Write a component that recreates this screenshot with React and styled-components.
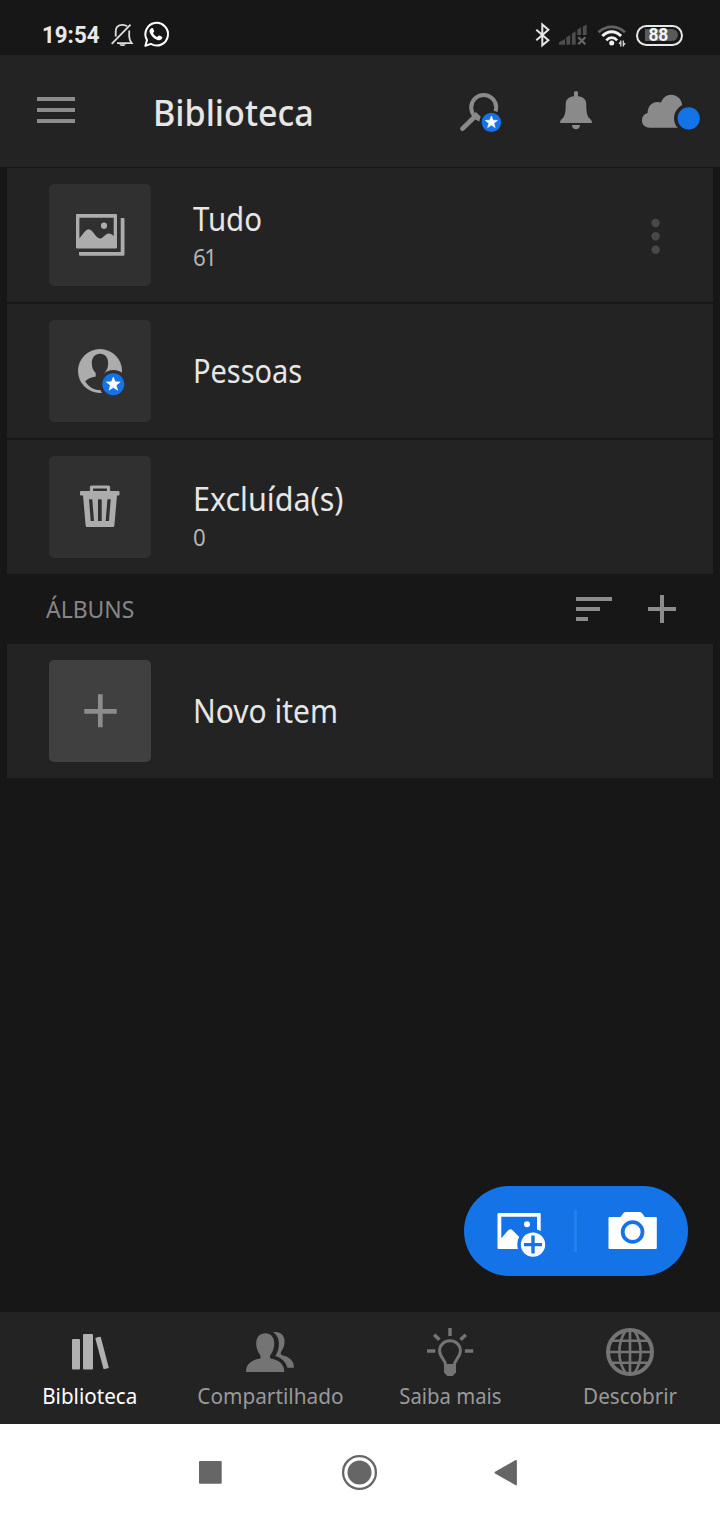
import React from 'react';
import styled, { createGlobalStyle } from 'styled-components';

const GlobalStyle = createGlobalStyle`
  *, *::before, *::after { box-sizing: border-box; }
  html, body { margin: 0; background: #171717; }
  body { font-family: "Noto Sans", "Open Sans", sans-serif; }
  button { border: 0; padding: 0; background: none; font: inherit; color: inherit; }
`;

const Screen = styled.div`
  display: flex;
  flex-direction: column;
  width: 720px;
  height: 1520px;
  background: #171717;
  overflow: hidden;
`;

const Label = styled.span`
  display: block;
  width: max-content;
  font-size: ${p => p.$size}px;
  line-height: ${p => p.$line}px;
  font-weight: ${p => p.$weight || 400};
  color: ${p => p.$color || '#e6e6e6'};
  letter-spacing: ${p => p.$tracking || 0}px;
  transform: scaleX(${p => p.$stretch || 1});
  transform-origin: ${p => p.$origin || 'left'} center;
`;

const Svg = styled.svg`
  display: block;
  flex: none;
  overflow: visible;
`;

/* Every drawing keeps screen units, so the view box also gives its size. */
function Icon({ box, children, ...rest }) {
  const [, , w, h] = box.split(' ');
  return (
    <Svg width={w} height={h} viewBox={box} fill="none" aria-hidden="true" {...rest}>
      {children}
    </Svg>
  );
}

/* ---------- status bar ---------- */

const StatusBar = styled.header`
  display: flex;
  justify-content: space-between;
  align-items: flex-start;
  height: 55px;
  padding: 20px 37.5px 0 41.5px;
`;

const StatusGroup = styled.div`
  display: flex;
  align-items: center;
  height: 30px;
  gap: ${p => p.$gap}px;
`;

const Clock = styled.time`
  width: 58px;
  margin-right: 1px;
  font: 700 23.5px/30px Roboto, sans-serif;
  color: #e8e8e8;
  white-space: nowrap;
  transform: scaleX(0.95);
  transform-origin: left center;
`;

const Battery = styled.div`
  width: 46.5px;
  height: 21px;
  border: 2px solid #e8e8e8;
  border-radius: 11px;
  padding: 2.5px 2.5px 2.5px 6.5px;
`;

const Charge = styled.div`
  height: 12px;
  padding-left: 4px;
  border-radius: 0 6px 6px 0;
  background: #595959;
  color: #f4f4f4;
  font: 700 17.5px/13px Roboto, sans-serif;
  letter-spacing: -0.3px;
`;

/* ---------- top bar ---------- */

const TopBar = styled.div`
  display: flex;
  align-items: center;
  height: 112px;
  padding: 0 19px 0 37px;
  background: #232323;
`;

const Title = styled.h1`
  flex: 1;
  margin: 0;
  padding: 4px 0 0 78px;
`;

const Actions = styled.div`
  display: flex;
  gap: 40px;
`;

/* ---------- library list ---------- */

const Content = styled.main`
  flex: 1;
  display: flex;
  flex-direction: column;
  padding: 1px 7px 0;
  position: relative;
`;

const List = styled.div`
  display: flex;
  flex-direction: column;
  gap: 2px;
`;

const Row = styled.div`
  display: flex;
  align-items: center;
  height: 134px;
  padding: 0 53px 0 42px;
  background: #232323;
`;

const Thumb = styled.div`
  display: flex;
  align-items: center;
  justify-content: center;
  width: 102px;
  height: 102px;
  border-radius: 5px;
  background: ${p => (p.$light ? '#404040' : '#303030')};
`;

const RowText = styled.div`
  flex: 1;
  display: flex;
  flex-direction: column;
  gap: 2px;
  margin-left: 42px;
  padding-top: ${p => p.$drop || 0}px;
`;

const SectionBar = styled.div`
  display: flex;
  align-items: center;
  height: 70px;
  padding: 0 37px 0 39px;
`;

const SectionTools = styled.div`
  display: flex;
  gap: 36px;
  margin-left: auto;
`;

/* ---------- floating actions ---------- */

const Fab = styled.div`
  position: absolute;
  right: 32px;
  bottom: 36px;
  display: flex;
  align-items: center;
  width: 224px;
  height: 90px;
  padding: 0 31px 0 33px;
  border-radius: 45px;
  background: #1473e6;
`;

const FabDivider = styled.span`
  width: 3px;
  height: 42px;
  margin: 0 31px 0 28px;
  background: #2680eb;
`;

/* ---------- tabs ---------- */

const Tabs = styled.nav`
  display: grid;
  grid-template-columns: repeat(4, 1fr);
  height: 112px;
  background: #232323;
`;

const Tab = styled.button`
  display: flex;
  flex-direction: column;
  align-items: center;
  padding-top: 14px;
`;

const SystemBar = styled.footer`
  display: flex;
  align-items: center;
  height: 96px;
  padding: 1px 0 0 198px;
  background: #fff;
`;

const SystemButton = styled.button`
  margin-right: ${p => p.$after || 0}px;
`;

function StarBadge({ cx, cy, r }) {
  const pts = Array.from({ length: 10 }, (_, i) => {
    const d = i % 2 ? r * 0.28 : r * 0.66;
    const a = -Math.PI / 2 + (i * Math.PI) / 5;
    return `${(cx + d * Math.cos(a)).toFixed(2)},${(cy + d * Math.sin(a)).toFixed(2)}`;
  }).join(' ');
  return (
    <>
      <circle cx={cx} cy={cy} r={r} fill="#1473e6" />
      <polygon points={pts} fill="#fff" stroke="#fff" strokeWidth="0.6" />
    </>
  );
}

const MutedBell = () => (
  <Icon box="109.5 22 23 26" stroke="#dedede" strokeWidth="1.8">
    <path d="M115.200 36.500V31.500c0-4.200 2.700-6.700 6.800-6.700 1.800 0 3.300.500 4.600 1.500M128.700 30.500v6c0 2 .7 4.200 2.600 6.700h-14.800" />
    <path d="M111.200 43.800 130 24.700" />
    <path d="M118.800 44.200h6.400c-.6 1.200-1.700 1.900-3.200 1.900s-2.600-.7-3.200-1.900z" fill="#dedede" stroke="none" />
  </Icon>
);

const WhatsApp = () => (
  <Icon box="142 21 28 28">
    <path d="M145.400 45.800l1.600-5.800a11.300 11.300 0 1 1 3.900 3.900z" stroke="#fff" strokeWidth="2" strokeLinejoin="round" />
    <path
      d="M150.300 29.200c.6-.9 1.600-1.600 2.300-1.200.5.200 1.400 2.500 1.600 3.100.2.700-1.200 1.700-1.100 2.200.2 1 2.500 3.300 3.800 3.600.7.200 1.600-1.600 2.300-1.400.8.200 2.800 1.200 3.100 1.600.5.800-.8 2.500-2.100 3-1.500.5-4.500-.5-7-2.700-2.400-2.200-4.100-5.100-3.700-7.100.1-.4.400-.8.800-1.100z"
      fill="#fff"
    />
  </Icon>
);

const Bluetooth = () => (
  <Icon box="533 22 16 26" stroke="#e6e6e6" strokeWidth="2">
    <path d="M536.300 29.800 548.400 40.200 542.300 45.300V24.500l6.100 5.300-12.100 10.400" />
  </Icon>
);

const Signal = () => (
  <Icon box="558 22 30 26" fill="#4d4d4d">
    <path d="M559 44.700v-2.500l6-3.200v5.700zM566.400 44.700v-7.500l3.800-2.200v9.700zM571.900 44.700V33.500l3.700-2.200v13.400zM577.300 35v-5.500l3.700-2V35zM582.800 35v-8.500l3.800-2V35z" />
    <path d="M578.300 37.300l7 7M585.300 37.300l-7 7" stroke="#686868" strokeWidth="2.200" />
  </Icon>
);

const Wifi = () => (
  <Icon box="597 22 30 26">
    <path d="M598.500 32.200c8-7.200 18.500-7.200 26.500 0" stroke="#626262" strokeWidth="2.700" />
    <path d="M602.300 36c5.600-5.700 13.200-5.700 18.800 0" stroke="#f0f0f0" strokeWidth="2.900" />
    <path d="M606.300 40.300c3.200-3.600 7.600-3.600 10.800 0" stroke="#f0f0f0" strokeWidth="2.700" />
    <circle cx="611.700" cy="43" r="2.500" fill="#f0f0f0" />
    <path d="M620.800 46.500v-6M623.300 40.500v6M621 41.300l-2 2.500M623.200 45.700l2-2.500" stroke="#d8d8d8" strokeWidth="1.300" />
  </Icon>
);

const MenuIcon = () => (
  <Icon box="37 92 38 38" fill="#8c8c8c">
    <path d="M37 97h38v4H37zM37 108h38v4H37zM37 119h38v4H37z" />
  </Icon>
);

const SearchIcon = () => (
  <Icon box="459 90 52 42">
    <circle cx="483.700" cy="107.500" r="12.500" stroke="#8a8a8a" strokeWidth="4" />
    <path d="M475 116.500 462.500 128.600" stroke="#8a8a8a" strokeWidth="4.800" strokeLinecap="round" />
    <circle cx="491.400" cy="122.400" r="12" fill="#232323" />
    <path d="M474.500 113.500 479.500 118.300" stroke="#8a8a8a" strokeWidth="4" />
    <StarBadge cx={491.400} cy={122.400} r={9.700} />
  </Icon>
);

const BellIcon = () => (
  <Icon box="551 90 50 42" fill="#8a8a8a">
    <path d="M574 92.500q0-1.500 2-1.500t2 1.500v3.700c5.300.6 8.300 3 8.300 8.300 0 6.500.6 11 2.600 13.200 1.700 1.900 3.100 2.600 3.100 5.300h-32c0-2.700 1.400-3.400 3.100-5.300 2-2.200 2.600-6.700 2.600-13.200 0-5.300 3-7.700 8.300-8.300z" />
    <path d="M571.800 125h8.300c-.4 2.700-1.900 4.300-4.100 4.300s-3.800-1.600-4.200-4.300z" />
  </Icon>
);

const CloudIcon = () => (
  <Icon box="641 90 60 42" fill="#8a8a8a">
    <path d="M649.500 127.700a7.500 7.500 0 0 1-1.900-14.800c0-6.500 4.600-11 10.200-10.800 1.300 0 2.300.2 3.200.5 1.500-4.700 5.500-7.900 10.300-7.900 6 0 11 5 11 11.500v21.500z" />
    <circle cx="688.700" cy="118.300" r="14.700" fill="#232323" />
    <circle cx="688.700" cy="118.300" r="11.100" fill="#1473e6" />
  </Icon>
);

const PhotosIcon = () => (
  <Icon box="75 210 50 50" fill="#acacac">
    <path fillRule="evenodd" d="M77 214h39q1 0 1 1v32.400q0 1-1 1H77q-1 0-1-1V215q0-1 1-1zM79.400 217.700v20.800c2.600-3 6-9.300 9.400-9.300 4.300 0 6.500 9.200 11.400 9.200 3.300 0 5-4.900 8.600-4.900 2 0 3.500 1 4.900 2.500v-18.300z" />
    <circle cx="104" cy="225.700" r="3.100" />
    <path d="M120.700 218h2.800q1 0 1 1v35.700q0 1-1 1H80q-1 0-1-1V252h41.700z" />
  </Icon>
);

const PeopleIcon = () => (
  <Icon box="75 346 50 50">
    <circle cx="100" cy="371" r="22" fill="#acacac" />
    <path
      d="M100 353.700c5 0 8.200 3.800 8.200 9.200 0 4.300-1.300 7.600-3.900 10.200v3.500c5 1.200 9 2.200 11 4.600-3 5.600-8.500 8.800-15.300 8.800-6.300 0-11.500-3.100-14.800-8.800 2-2.300 5.800-3.700 10.500-4.700v-3.400c-2.600-2.600-3.900-5.900-3.900-10.200 0-5.400 3.200-9.200 8.200-9.200z"
      fill="#303030"
    />
    <circle cx="113.300" cy="384.300" r="14.200" fill="#303030" />
    <StarBadge cx={113.300} cy={384.300} r={11} />
  </Icon>
);

const TrashIcon = () => (
  <Icon box="75 482 50 50" fill="#acacac">
    <path d="M91.500 492v-5h17v5" fill="none" stroke="#acacac" strokeWidth="3.200" strokeLinejoin="round" />
    <path d="M81 491h37.500q1 0 1 1v2.600q0 1-1 1H117l-2.700 30.300q-.1 1.100-1.200 1.100H86.900q-1.100 0-1.200-1.100L83 495.600h-2q-1 0-1-1V492q0-1 1-1z" />
    <path d="M98 500q0-.8.8-.8h2.100q.8 0 .8.800v21h-3.700zM89 499.300h3.300L94 521h-3.300zM107.400 499.300h3.300L109 521h-3.300z" fill="#303030" />
  </Icon>
);

const NewIcon = () => (
  <Icon box="75 686 50 50" stroke="#8c8c8c" strokeWidth="4.700" strokeLinecap="butt">
    <path d="M84.300 711.300h32.400M100.300 694.300v33" />
  </Icon>
);

const MoreIcon = () => (
  <Icon box="651 216 9 38" fill="#484848">
    <circle cx="655.600" cy="223" r="4.200" />
    <circle cx="655.600" cy="236.300" r="4.200" />
    <circle cx="655.600" cy="249.700" r="4.200" />
  </Icon>
);

const SortIcon = () => (
  <Icon box="576 594 36 30" fill="#8c8c8c">
    <path d="M576 597h36v4h-36zM576 607h24v4h-24zM576 617h12v4h-12z" />
  </Icon>
);

const AddIcon = () => (
  <Icon box="648 594 28 30" fill="#8c8c8c">
    <path d="M648 607h12v-12h4v12h12v4h-12v12h-4v-12h-12z" />
  </Icon>
);

const AddPhotoIcon = () => (
  <Icon box="497 1205 49 52" fill="#fff">
    <path fillRule="evenodd" d="M498.500 1213h41.500q.7 0 .7.700v34.600q0 .7-.7.700h-41.500q-1 0-1-1v-34q0-1 1-1zM501.300 1216.700v21.600l6.500-7.600q2.500-2.800 5-.2l8 8v10h16.200v-31.800z" />
    <circle cx="527" cy="1224.300" r="3" />
    <circle cx="533" cy="1244.600" r="15.700" fill="#1473e6" />
    <circle cx="533" cy="1244.600" r="12.200" />
    <path d="M524 1244.600h18M533 1235.600v18" stroke="#1473e6" strokeWidth="3.400" />
  </Icon>
);

const CameraIcon = () => (
  <Icon box="608 1205 49 52" fill="#fff">
    <path d="M609.500 1217h11l3-3.900q.9-1.100 2.300-1.100h13.700q1.400 0 2.300 1.100l3 3.900h11q1 0 1 1v30q0 1-1 1h-46.300q-1 0-1-1v-30q0-1 1-1z" />
    <circle cx="632.600" cy="1232" r="9.900" stroke="#1473e6" strokeWidth="3.800" />
  </Icon>
);

const BooksIcon = () => (
  <Icon box="60 1326 60 52" fill="#b1b1b1">
    <path d="M72 1340q0-1 1-1h6q1 0 1 1v28.500q0 1-1 1h-6q-1 0-1-1zM83 1335q0-1 1-1h8q1 0 1 1v33.500q0 1-1 1h-8q-1 0-1-1zM95.400 1338.700q-.2-.8.600-1l3.800-1q.8-.2 1 .6l7.900 29.900q.2.800-.6 1l-3.700.9q-.8.200-1-.6z" />
  </Icon>
);

const ShareIcon = () => (
  <Icon box="240 1326 60 52" fill="#747474">
    <path d="M265.300 1333.300c5.400 0 9 4 9 10.300 0 4.700-1.600 8.400-3.700 11.200-1 1.400-1 3.500.6 4 7.500 1.200 13.100 5 13.100 13.200h-38.300c0-8.200 5.900-12 13.400-13.200 1.500-.5 1.500-2.600.5-4-2.100-2.800-3.700-6.500-3.700-11.200 0-6.300 3.700-10.300 9.100-10.300z" />
    <path d="M273.300 1332.300c6.600-1.200 11.300 2.700 11.300 9.200 0 4-1.300 7.200-3.300 10-1 1.500-.7 3.300.9 3.700 7 1.400 11.800 5.500 11.800 12.500h-6.600c-1.900-6.100-5.900-9.800-12.100-11.700 2.400-3.500 3.600-7.600 3.600-12.400 0-4.700-1.700-8.600-5.600-11.300z" />
  </Icon>
);

const BulbIcon = () => (
  <Icon box="420 1326 60 52" stroke="#747474" strokeWidth="3">
    <path d="M445.500 1365c0-5.500-5.900-7.500-5.900-14.200 0-5.700 4.600-10.100 10.400-10.100s10.400 4.400 10.400 10.100c0 6.700-5.900 8.700-5.900 14.200" />
    <path d="M444 1364h12v8.500l-3.300 3.500h-5.400l-3.300-3.500z" fill="#747474" stroke="none" />
    <path d="M450 1328v8M427 1351h8.300M464.900 1351h8.300M434.200 1334.800l5.200 5M465.800 1334.800l-5.200 5" strokeWidth="3.500" />
  </Icon>
);

const GlobeIcon = () => (
  <Icon box="600 1326 60 52" stroke="#747474" strokeWidth="2.600">
    <circle cx="630" cy="1352" r="22" strokeWidth="4" />
    <path d="M630 1330v44M608 1352h44M612 1340.700h36M612 1362.800h36" />
    <path d="M625.500 1331c-8.200 12-8.200 30 0 42M634.500 1331c8.200 12 8.200 30 0 42" />
  </Icon>
);

const TABS = [
  { label: 'Biblioteca', icon: <BooksIcon />, stretch: 0.937, color: '#ffffff' },
  { label: 'Compartilhado', icon: <ShareIcon />, stretch: 0.945 },
  { label: 'Saiba mais', icon: <BulbIcon />, stretch: 0.922 },
  { label: 'Descobrir', icon: <GlobeIcon />, stretch: 0.938 },
];

function LibraryRow({ icon, name, stretch, count, countTracking, drop, light, children }) {
  return (
    <Row>
      <Thumb $light={light}>{icon}</Thumb>
      <RowText $drop={drop}>
        <Label $size={32} $line={40} $stretch={stretch}>{name}</Label>
        {count && (
          <Label $size={24} $line={32} $color="#b3b3b3" $stretch={0.93} $tracking={countTracking}>
            {count}
          </Label>
        )}
      </RowText>
      {children}
    </Row>
  );
}

export default function App() {
  return (
    <>
      <GlobalStyle />
      <Screen>
        <StatusBar>
          <StatusGroup $gap={9}>
            <Clock>19:54</Clock>
            <MutedBell />
            <WhatsApp />
          </StatusGroup>
          <StatusGroup $gap={9}>
            <Bluetooth />
            <Signal />
            <Wifi />
            <Battery><Charge>88</Charge></Battery>
          </StatusGroup>
        </StatusBar>

        <TopBar>
          <MenuIcon />
          <Title>
            <Label $size={36} $line={48} $weight={500} $stretch={0.947}>Biblioteca</Label>
          </Title>
          <Actions>
            <SearchIcon />
            <BellIcon />
            <CloudIcon />
          </Actions>
        </TopBar>

        <Content>
          <List>
            <LibraryRow icon={<PhotosIcon />} name="Tudo" stretch={0.92} count="61" countTracking={-1.7} drop={1}>
              <MoreIcon />
            </LibraryRow>
            <LibraryRow icon={<PeopleIcon />} name="Pessoas" stretch={0.905} />
            <LibraryRow icon={<TrashIcon />} name="Excluída(s)" stretch={0.953} count="0" drop={17} />
          </List>
          <SectionBar>
            <Label $size={24} $line={32} $color="#868686" $stretch={0.955}>ÁLBUNS</Label>
            <SectionTools>
              <SortIcon />
              <AddIcon />
            </SectionTools>
          </SectionBar>
          <LibraryRow icon={<NewIcon />} name="Novo item" stretch={0.937} light />

          <Fab>
            <AddPhotoIcon />
            <FabDivider />
            <CameraIcon />
          </Fab>
        </Content>

        <Tabs>
          {TABS.map(tab => (
            <Tab key={tab.label}>
              {tab.icon}
              <Label $size={22} $line={34} $color={tab.color || '#999999'} $stretch={tab.stretch} $origin="center">
                {tab.label}
              </Label>
            </Tab>
          ))}
        </Tabs>

        <SystemBar>
          <SystemButton $after={118} aria-label="Recentes">
            <Icon box="198 1452 25 41">
              <rect x="199" y="1461" width="22.700" height="22.700" rx="1" fill="#666" />
            </Icon>
          </SystemButton>
          <SystemButton $after={115} aria-label="Início">
            <Icon box="341 1452 37 41">
              <circle cx="359.500" cy="1472.500" r="16.400" stroke="#666" strokeWidth="2.300" />
              <circle cx="359.500" cy="1472.500" r="12" fill="#666" />
            </Icon>
          </SystemButton>
          <SystemButton aria-label="Voltar">
            <Icon box="493 1452 25 41">
              <path d="M495.500 1472.600 516 1460.900v23.500z" fill="#666" stroke="#666" strokeWidth="1.800" strokeLinejoin="round" />
            </Icon>
          </SystemButton>
        </SystemBar>
      </Screen>
    </>
  );
}
